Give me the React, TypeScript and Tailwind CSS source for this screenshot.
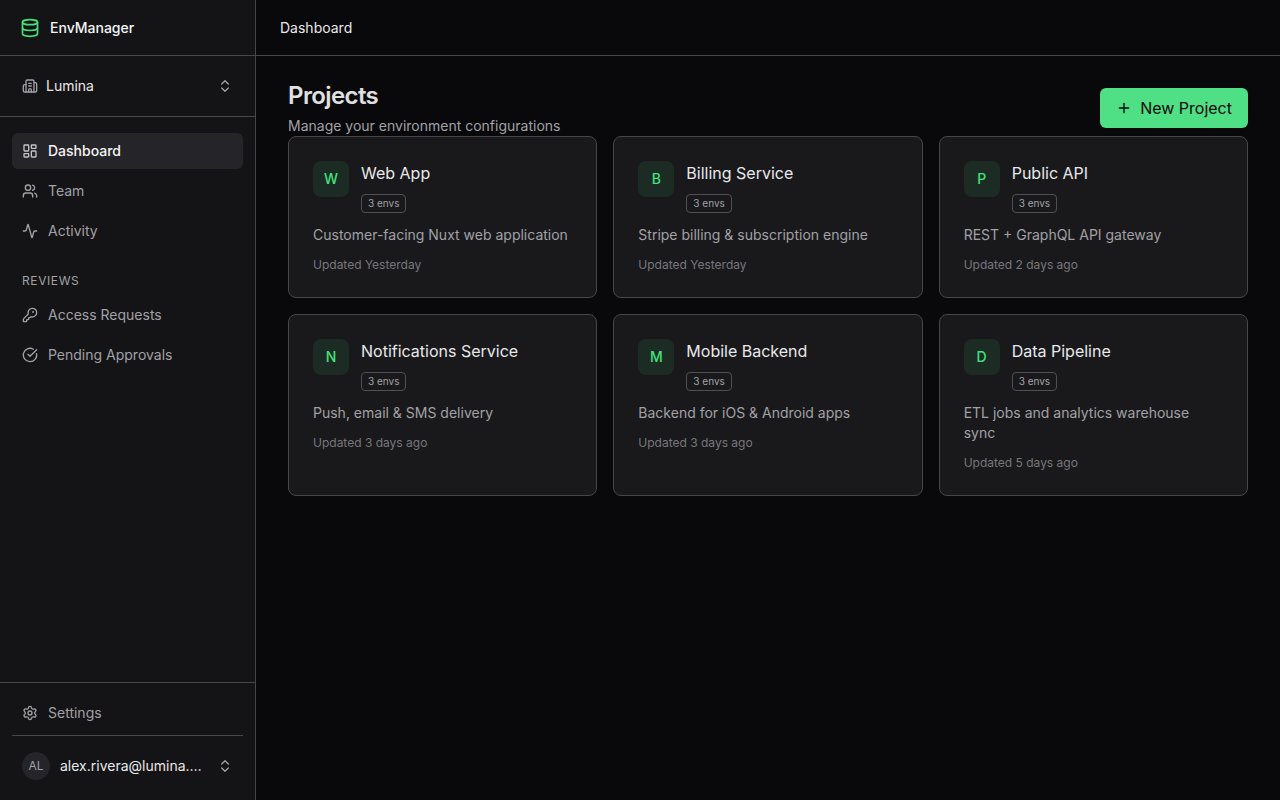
import React from 'react';
import {
  Activity,
  Building2,
  ChevronsUpDown,
  CircleCheckBig,
  Database,
  KeyRound,
  LayoutDashboard,
  Plus,
  Settings,
  Users,
} from 'lucide-react';

const mainLinks = [
  { label: 'Dashboard', icon: LayoutDashboard, active: true },
  { label: 'Team', icon: Users },
  { label: 'Activity', icon: Activity },
];

const reviewLinks = [
  { label: 'Access Requests', icon: KeyRound },
  { label: 'Pending Approvals', icon: CircleCheckBig },
];

const projects = [
  { name: 'Web App', description: 'Customer-facing Nuxt web application', updated: 'Yesterday' },
  { name: 'Billing Service', description: 'Stripe billing & subscription engine', updated: 'Yesterday' },
  { name: 'Public API', description: 'REST + GraphQL API gateway', updated: '2 days ago' },
  { name: 'Notifications Service', description: 'Push, email & SMS delivery', updated: '3 days ago' },
  { name: 'Mobile Backend', description: 'Backend for iOS & Android apps', updated: '3 days ago' },
  { name: 'Data Pipeline', description: 'ETL jobs and analytics warehouse sync', updated: '5 days ago' },
];

function NavLink({ label, icon: Icon, active }: { label: string; icon: React.ElementType; active?: boolean }) {
  return (
    <a
      href="#"
      aria-current={active ? 'page' : undefined}
      className={`flex h-9 items-center gap-2.5 rounded-md px-2.5 text-sm ${
        active ? 'bg-[#252529] font-medium text-[#f4f4f5]' : 'text-[#a1a1a6] hover:bg-[#1f1f22]'
      }`}
    >
      <Icon className={`h-4 w-4 shrink-0 ${active ? 'text-[#c4c4c8]' : ''}`} />
      {label}
    </a>
  );
}

function Sidebar() {
  return (
    <aside className="flex w-64 shrink-0 flex-col border-r border-[#47474a] bg-[#141416]">
      <div className="flex h-14 items-center gap-2.5 border-b border-[#47474a] px-5">
        <Database className="h-5 w-5 text-[#42e27a]" />
        <span className="text-sm font-medium text-[#f4f4f5]">EnvManager</span>
      </div>

      <div className="border-b border-[#47474a] p-3">
        <button type="button" className="flex h-9 w-full items-center gap-2 rounded-md px-2.5 text-sm text-[#e8e8eb]">
          <Building2 className="h-4 w-4 shrink-0 text-[#a1a1a6]" />
          <span className="flex-1 text-left">Lumina</span>
          <ChevronsUpDown className="h-4 w-4 shrink-0 text-[#a1a1a6]" />
        </button>
      </div>

      <nav className="flex flex-1 flex-col gap-1 px-3 py-4">
        {mainLinks.map((link) => (
          <NavLink key={link.label} {...link} />
        ))}
        <h2 className="mt-5 mb-1 px-2.5 text-xs tracking-wider text-[#a1a1a6] uppercase">Reviews</h2>
        {reviewLinks.map((link) => (
          <NavLink key={link.label} {...link} />
        ))}
      </nav>

      <div className="border-t border-[#47474a] p-3">
        <NavLink label="Settings" icon={Settings} />
        <div className="mt-1 border-t border-[#47474a] pt-2">
          <button type="button" className="flex h-11 w-full items-center gap-2.5 rounded-md px-2.5 text-sm text-[#e8e8eb]">
            <span className="flex h-7 w-7 shrink-0 items-center justify-center rounded-full bg-[#252529] text-xs text-[#a1a1a6]">
              AL
            </span>
            <span className="min-w-0 flex-1 truncate text-left">alex.rivera@lumina.dev</span>
            <ChevronsUpDown className="h-4 w-4 shrink-0 text-[#a1a1a6]" />
          </button>
        </div>
      </div>
    </aside>
  );
}

function ProjectCard({ name, description, updated }: { name: string; description: string; updated: string }) {
  return (
    <a href="#" className="block rounded-lg border border-[#47474a] bg-[#19191b] p-6">
      <div className="flex gap-3">
        <div className="flex h-9 w-9 shrink-0 items-center justify-center rounded-lg bg-[#1c2c24] text-sm font-medium text-[#42e27a]">
          {name[0]}
        </div>
        <div className="min-w-0">
          <h3 className="truncate text-base text-[#e8e8eb]">{name}</h3>
          <span className="mt-[9px] flex h-[19px] w-fit items-center rounded-sm border border-[#505054] px-1.5 text-[10px] text-[#a1a1a6]">
            3 envs
          </span>
        </div>
      </div>
      <p className="mt-3 text-sm text-[#a1a1a6]">{description}</p>
      <p className="mt-3 text-xs text-[#77777b]">Updated {updated}</p>
    </a>
  );
}

export default function App() {
  return (
    <div className="flex min-h-screen bg-[#09090b] font-['Inter',sans-serif] text-[#e8e8eb]">
      <Sidebar />

      <div className="flex min-w-0 flex-1 flex-col">
        <header className="flex h-14 items-center border-b border-[#47474a] px-6 text-sm">Dashboard</header>

        <main className="flex-1 px-8 py-6">
          <div className="flex items-center justify-between">
            <div>
              <h1 className="text-2xl font-semibold tracking-tight text-[#e0e0e3]">Projects</h1>
              <p className="mt-1 text-sm text-[#a1a1a6]">Manage your environment configurations</p>
            </div>
            <button type="button" className="flex h-10 items-center gap-2 rounded-md bg-[#4fdf84] px-4 text-base text-[#09090b]">
              <Plus className="h-4 w-4" />
              New Project
            </button>
          </div>

          <div className="grid grid-cols-1 gap-4 md:grid-cols-2 lg:grid-cols-3">
            {projects.map((project) => (
              <ProjectCard key={project.name} {...project} />
            ))}
          </div>
        </main>
      </div>
    </div>
  );
}
